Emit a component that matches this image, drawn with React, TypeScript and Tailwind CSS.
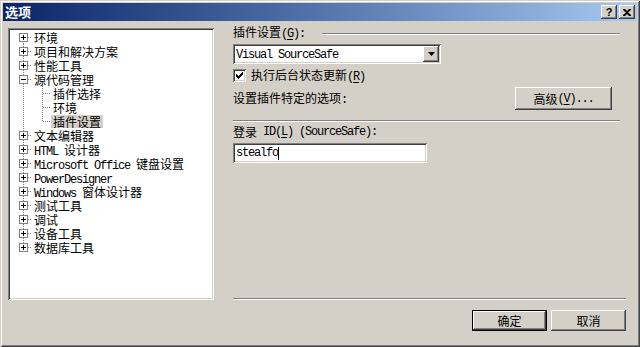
import React from 'react';

type Node = {
  label: string;
  level: 0 | 1;
  toggle?: 'plus' | 'minus';
  first?: boolean;
  last?: boolean;
  selected?: boolean;
};

const nodes: Node[] = [
  { label: '环境', level: 0, toggle: 'plus', first: true },
  { label: '项目和解决方案', level: 0, toggle: 'plus' },
  { label: '性能工具', level: 0, toggle: 'plus' },
  { label: '源代码管理', level: 0, toggle: 'minus' },
  { label: '插件选择', level: 1 },
  { label: '环境', level: 1 },
  { label: '插件设置', level: 1, last: true, selected: true },
  { label: '文本编辑器', level: 0, toggle: 'plus' },
  { label: 'HTML 设计器', level: 0, toggle: 'plus' },
  { label: 'Microsoft Office 键盘设置', level: 0, toggle: 'plus' },
  { label: 'PowerDesigner', level: 0, toggle: 'plus' },
  { label: 'Windows 窗体设计器', level: 0, toggle: 'plus' },
  { label: '测试工具', level: 0, toggle: 'plus' },
  { label: '调试', level: 0, toggle: 'plus' },
  { label: '设备工具', level: 0, toggle: 'plus' },
  { label: '数据库工具', level: 0, toggle: 'plus', last: true },
];

// ascii runs get the half-width mono look, "&X" underlines X
function T({ s }: { s: string }) {
  const parts = s.split(/([\x20-\x7e]+)/).filter(Boolean);
  return (
    <>
      {parts.map((p, i) => {
        if (!/^[\x20-\x7e]+$/.test(p)) return <span key={i}>{p}</span>;
        const amp = p.indexOf('&');
        const mono = "font-[family-name:'Liberation_Mono',monospace] tracking-[-1.2px] whitespace-pre";
        if (amp < 0) return <span key={i} className={mono}>{p}</span>;
        return (
          <span key={i} className={mono}>
            {p.slice(0, amp)}
            <span className="underline underline-offset-2">{p[amp + 1]}</span>
            {p.slice(amp + 2)}
          </span>
        );
      })}
    </>
  );
}

const raised =
  'bg-[#d4d0c8] shadow-[inset_-1px_-1px_0_#404040,inset_1px_1px_0_#ffffff,inset_-2px_-2px_0_#808080]';
const sunken =
  'bg-white shadow-[inset_1px_1px_0_#808080,inset_-1px_-1px_0_#ffffff,inset_2px_2px_0_#404040,inset_-2px_-2px_0_#d4d0c8]';

function TreeGutter({ n }: { n: Node }) {
  const w = n.level === 0 ? 22 : 41;
  const dot = { stroke: '#808080', strokeWidth: 1, strokeDasharray: '1 1' };
  const rootTop = n.level === 0 && n.first ? 7 : 0;
  const rootBottom = n.level === 0 && n.last ? 7 : 14;
  return (
    <svg width={w} height={14} className="shrink-0">
      <line x1={13.5} x2={13.5} y1={rootTop} y2={rootBottom} {...dot} />
      {n.level === 0 && <line x1={18} x2={22} y1={7.5} y2={7.5} {...dot} />}
      {n.level === 1 && (
        <>
          <line x1={32.5} x2={32.5} y1={0} y2={n.last ? 8 : 14} {...dot} />
          <line x1={33} x2={41} y1={7.5} y2={7.5} {...dot} />
        </>
      )}
      {n.toggle && (
        <>
          <rect x={9.5} y={3.5} width={8} height={8} fill="#fff" stroke="#808080" />
          <line x1={11} x2={16} y1={7.5} y2={7.5} stroke="#000" />
          {n.toggle === 'plus' && <line x1={13.5} x2={13.5} y1={5} y2={10} stroke="#000" />}
        </>
      )}
    </svg>
  );
}

function Btn({ children, def, className }: { children: React.ReactNode; def?: boolean; className: string }) {
  if (def) {
    return (
      <div className={`border border-black ${className}`}>
        <div className={`w-full h-full flex items-center justify-center ${raised}`}>{children}</div>
      </div>
    );
  }
  return <div className={`flex items-center justify-center ${raised} ${className}`}>{children}</div>;
}

function Etched({ className }: { className: string }) {
  return <div className={`h-[2px] border-t border-t-[#808080] border-b border-b-white ${className}`} />;
}

export default function App() {
  return (
    <div className="w-[640px] h-[347px] bg-[#d4d0c8] p-[3px] flex flex-col text-[12px] leading-[14px] text-black font-[family-name:'Noto_Sans_CJK_SC',sans-serif] shadow-[inset_1px_1px_0_#d4d0c8,inset_-1px_-1px_0_#404040,inset_2px_2px_0_#ffffff,inset_-2px_-2px_0_#808080]">
      {/* title bar */}
      <div className="h-[18px] shrink-0 flex items-center justify-between pl-[2px] pr-[2px] bg-gradient-to-r from-[#0a246a] to-[#a6caf0]">
        <span className="text-white font-bold text-[13px] leading-[16px]">选项</span>
        <div className="flex gap-[2px]">
          <Btn className="w-[16px] h-[14px]">
            <span className="font-[family-name:'Liberation_Sans',sans-serif] font-bold text-[11px] leading-[11px]">?</span>
          </Btn>
          <Btn className="w-[16px] h-[14px]">
            <svg width={8} height={7}>
              <path d="M0 0h2l2 2 2-2h2v1l-3 2.5 3 2.5v1h-2l-2-2-2 2h-2v-1l3-2.5-3-2.5z" fill="#000" />
            </svg>
          </Btn>
        </div>
      </div>

      <div className="flex pl-[5px]">
        {/* tree */}
        <div className={`mt-[7px] w-[206px] h-[272px] pt-[2px] pl-[2px] ${sunken}`}>
          {nodes.map((n, i) => (
            <div key={i} className="h-[14px] flex items-center">
              <TreeGutter n={n} />
              <span
                className={`px-[2px] h-[13px] leading-[13px] whitespace-nowrap ${n.selected ? 'bg-[#d4d0c8]' : ''}`}
              >
                <T s={n.label} />
              </span>
            </div>
          ))}
        </div>

        {/* settings */}
        <div className="ml-[19px] w-[393px] flex flex-col">
          <div className="mt-[5px] h-[14px] flex items-center w-[387px]">
            <span className="w-[89px] shrink-0"><T s="插件设置(&G):" /></span>
            <Etched className="flex-1 mt-[1px]" />
          </div>

          <div className={`mt-[4px] w-[208px] h-[20px] flex items-center pl-[3px] pr-[2px] ${sunken}`}>
            <span className="flex-1"><T s="Visual SourceSafe" /></span>
            <Btn className="w-[16px] h-[16px]">
              <svg width={7} height={4}>
                <path d="M0 0h7l-3.5 4z" fill="#000" />
              </svg>
            </Btn>
          </div>

          <div className="mt-[4px] h-[15px] flex items-center gap-[5px]">
            <div className={`w-[13px] h-[13px] relative ${sunken}`}>
              <svg width={13} height={13} className="absolute left-0 top-0">
                {[
                  [3, 5], [4, 6], [5, 7], [6, 6], [7, 5], [8, 4], [9, 3],
                ].map(([x, y]) => (
                  <rect key={x} x={x} y={y} width={1} height={3} fill="#000" />
                ))}
              </svg>
            </div>
            <span><T s="执行后台状态更新(&R)" /></span>
          </div>

          <div className="mt-[4px] h-[23px] w-[379px] flex items-center justify-between">
            <span><T s="设置插件特定的选项:" /></span>
            <Btn className="w-[97px] h-[23px]">
              <T s="高级(&V)..." />
            </Btn>
          </div>

          <Etched className="mt-[10px] w-[387px]" />

          <div className="mt-[3px] h-[14px] flex items-center">
            <T s="登录 ID(&L) (SourceSafe):" />
          </div>

          <div className={`mt-[4px] w-[194px] h-[20px] flex items-center pl-[3px] ${sunken}`}>
            <T s="stealfo" />
            <span className="w-[1px] h-[13px] bg-black" />
          </div>

          <Etched className="mt-[135px] w-[393px]" />

          <div className="mt-[10px] flex justify-end gap-[4px]">
            <Btn def className="w-[75px] h-[21px]">确定</Btn>
            <Btn className="w-[75px] h-[21px]">取消</Btn>
          </div>
        </div>
      </div>
    </div>
  );
}
